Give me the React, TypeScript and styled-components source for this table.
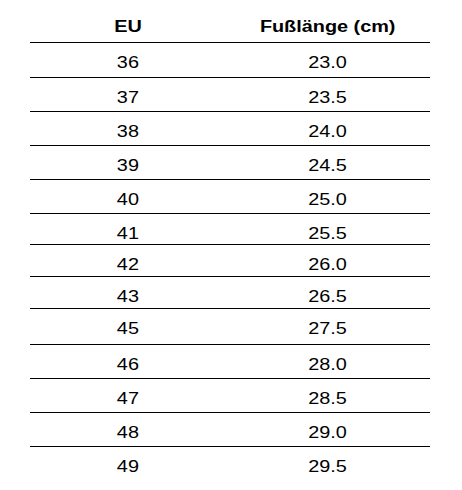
import React from "react";
import styled, { createGlobalStyle } from "styled-components";

const Global = createGlobalStyle`
  html, body { margin: 0; padding: 0; background: #ffffff; }
  body { font-family: "Liberation Sans", Arial, sans-serif; color: #000; }
`;

const Table = styled.div`
  margin-left: 30px;
  width: 400px;
  display: flex;
  flex-direction: column;
`;

const Row = styled.div<{ $h: number; $last?: boolean; $head?: boolean }>`
  box-sizing: border-box;
  height: ${(p) => p.$h}px;
  display: grid;
  grid-template-columns: 196px 1fr;
  padding-top: ${(p) => (p.$head ? 18 : 11)}px;
  border-bottom: ${(p) => (p.$last ? "none" : "1px solid #000")};
  font-size: 16px;
  line-height: 18px;
  font-weight: ${(p) => (p.$head ? 700 : 400)};
`;

const Cell = styled.div`
  text-align: center;
  white-space: nowrap;
`;

const Txt = styled.span`
  display: inline-block;
  transform: scaleX(1.24);
  transform-origin: center;
`;

const rows: [string, string, number][] = [
  ["36", "23.0", 35],
  ["37", "23.5", 34],
  ["38", "24.0", 34],
  ["39", "24.5", 34],
  ["40", "25.0", 34],
  ["41", "25.5", 31],
  ["42", "26.0", 32],
  ["43", "26.5", 32],
  ["45", "27.5", 36],
  ["46", "28.0", 34],
  ["47", "28.5", 34],
  ["48", "29.0", 34],
  ["49", "29.5", 34],
];

export default function App() {
  return (
    <>
      <Global />
      <Table>
        <Row $h={43} $head>
          <Cell><Txt>EU</Txt></Cell>
          <Cell><Txt>Fußlänge (cm)</Txt></Cell>
        </Row>
        {rows.map(([eu, cm, h], i) => (
          <Row key={eu} $h={h} $last={i === rows.length - 1}>
            <Cell><Txt>{eu}</Txt></Cell>
            <Cell><Txt>{cm}</Txt></Cell>
          </Row>
        ))}
      </Table>
    </>
  );
}
